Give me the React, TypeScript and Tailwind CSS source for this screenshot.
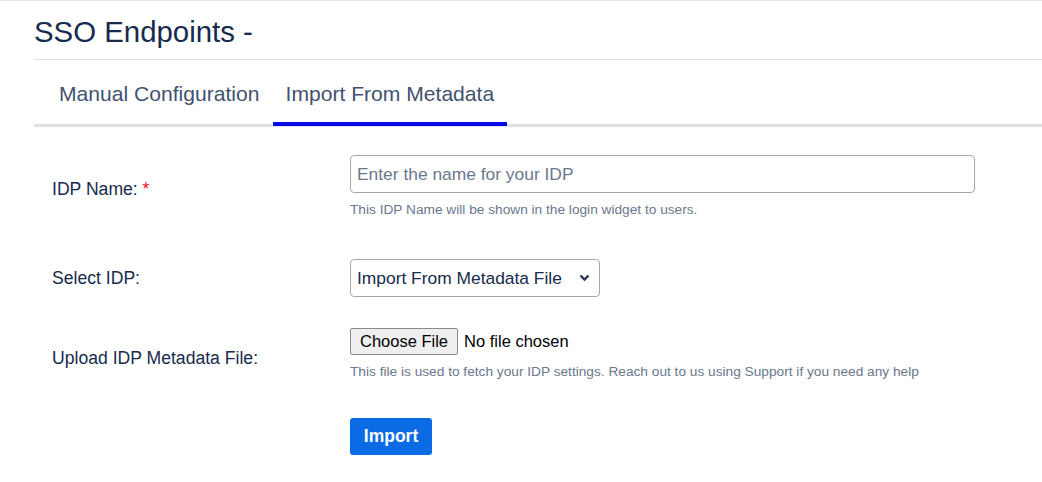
import { useState } from 'react';

function App() {
  const [tab, setTab] = useState('import');

  return (
    <div className="min-h-screen bg-white border-t border-[#e8e8ea] font-['Liberation_Sans',Arial,sans-serif] text-[#172b4d]">
      <div className="pl-[34px]">
        <div className="border-b border-[#dcdde0] pt-[14px] pb-[11px]">
          <h1 className="text-[29.4px] leading-[33px] font-normal">SSO Endpoints -</h1>
        </div>

        {/* tabs */}
        <div className="flex pl-3 border-b-[3px] border-[#dfe1e6]">
          <button
            onClick={() => setTab('manual')}
            className={'-mb-[2px] px-[13px] pt-[22px] pb-[16px] text-[21.1px] leading-[24px] text-[#42526e] border-b-4 ' + (tab === 'manual' ? 'border-[#0a0ae8]' : 'border-transparent')}
          >
            Manual Configuration
          </button>
          <button
            onClick={() => setTab('import')}
            className={'-mb-[2px] px-[13px] pt-[22px] pb-[16px] text-[21.1px] leading-[24px] text-[#42526e] border-b-4 ' + (tab === 'import' ? 'border-[#0a0ae8]' : 'border-transparent')}
          >
            Import From Metadata
          </button>
        </div>

        <div className="pl-[18px] pt-[28px]">
          <div className="grid grid-cols-[298px_625px] items-center">
            <label className="text-[17.6px] leading-[20px] translate-y-[2px]">
              IDP Name: <span className="text-[#e81212]">*</span>
            </label>
            <div>
              <input
                type="text"
                placeholder="Enter the name for your IDP"
                className="w-full h-[38px] px-[6px] border border-[#a5a7b2] rounded-[4px] text-[17.4px] placeholder:text-[#6b778c] outline-none"
              />
              <p className="mt-[9px] text-[13.7px] leading-[16px] text-[#6b778c]">
                This IDP Name will be shown in the login widget to users.
              </p>
            </div>
          </div>

          <div className="grid grid-cols-[298px_625px] items-center mt-[41px]">
            <label className="text-[17.6px] leading-[20px]">Select IDP:</label>
            <div className="relative w-[250px]">
              <select className="appearance-none w-full h-[38px] pl-[6px] pr-6 border border-[#a5a7b2] rounded-[4px] text-[17.4px] text-[#172b4d] bg-white outline-none">
                <option>Import From Metadata File</option>
                <option>Okta</option>
                <option>Azure AD</option>
              </select>
              <svg className="absolute right-[10px] top-[15px] pointer-events-none" width="11" height="8" viewBox="0 0 11 8">
                <polyline points="1.5,1.5 5.5,5.5 9.5,1.5" fill="none" stroke="#2b3550" strokeWidth="2.4" />
              </svg>
            </div>
          </div>

          <div className="grid grid-cols-[298px_625px] items-center mt-[31px]">
            <label className="text-[17.6px] leading-[20px] translate-y-[4px]">Upload IDP Metadata File:</label>
            <div>
              <input
                type="file"
                className="block h-[27px] text-[16.5px] leading-[25px] text-black file:h-[27px] file:mr-[6px] file:px-[9px] file:border file:border-[#8a8a8a] file:rounded-[2px] file:bg-[#efefef] file:text-black"
              />
              <p className="mt-[9px] text-[13.7px] leading-[16px] text-[#6b778c]">
                This file is used to fetch your IDP settings. Reach out to us using Support if you need any help
              </p>
            </div>
          </div>

          <div className="grid grid-cols-[298px_625px] mt-[38px]">
            <div />
            <div>
              <button className="h-[37px] w-[82px] rounded-[3px] bg-[#0b6be5] text-white font-bold text-[17.5px]">
                Import
              </button>
            </div>
          </div>
        </div>
      </div>
    </div>
  );
}

export default App;
